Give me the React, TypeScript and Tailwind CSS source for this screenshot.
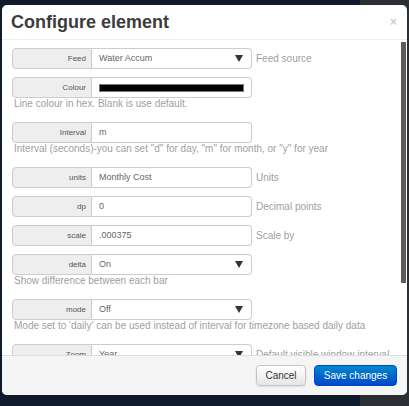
import React from "react";

type Field = {
  label: string;
  kind: "text" | "select" | "colour";
  value?: string;
  side?: string;
  help?: string;
};

const fields: Field[] = [
  { label: "Feed", kind: "select", value: "Water Accum", side: "Feed source" },
  { label: "Colour", kind: "colour", help: "Line colour in hex. Blank is use default." },
  {
    label: "Interval",
    kind: "text",
    value: "m",
    help: 'Interval (seconds)-you can set "d" for day, "m" for month, or "y" for year',
  },
  { label: "units", kind: "text", value: "Monthly Cost", side: "Units" },
  { label: "dp", kind: "text", value: "0", side: "Decimal points" },
  { label: "scale", kind: "text", value: ".000375", side: "Scale by" },
  { label: "delta", kind: "select", value: "On", help: "Show difference between each bar" },
  {
    label: "mode",
    kind: "select",
    value: "Off",
    help: "Mode set to 'daily' can be used instead of interval for timezone based daily data",
  },
  { label: "Zoom", kind: "select", value: "Year", side: "Default visible window interval" },
];

function Row({ f }: { f: Field }) {
  return (
    <div className="mb-2">
      <div className="flex items-center">
        <div className="flex h-[21px] w-[80px] items-center justify-end rounded-l-[4px] border border-[#ccc] bg-[#eeeeee] pr-[5px] text-[8px] font-normal text-[#555]">
          {f.label}
        </div>
        <div className="flex h-[21px] w-[160px] items-center rounded-r-[4px] border border-l-0 border-[#ccc] bg-white pl-[7px] pr-[7px] text-[9px] text-[#666]">
          {f.kind === "colour" ? (
            <div className="h-[8px] w-full border border-[#777] bg-black" />
          ) : (
            <span className="flex-1 truncate">{f.value}</span>
          )}
          {f.kind === "select" && (
            <svg width="8" height="7" viewBox="0 0 8 7" className="mr-px shrink-0">
              <polygon points="0,0 8,0 4,7" fill="#333" />
            </svg>
          )}
        </div>
        {f.side && <span className="ml-[4px] text-[10px] whitespace-nowrap text-[#a0a0a0]">{f.side}</span>}
      </div>
      {f.help && (
        <p className="h-[16px] pl-[2px] text-[10px] leading-[12px] whitespace-nowrap text-[#a0a0a0]">{f.help}</p>
      )}
    </div>
  );
}

export default function App() {
  return (
    <div
      className="h-[406px] w-[409px] overflow-hidden bg-[linear-gradient(to_right,#0f1b2b_360px,#2b2f33_360px)] pt-[5px] pl-[2px]"
      style={{ fontFamily: '"Liberation Sans", Arial, sans-serif' }}
    >
      <div className="flex h-[390px] w-[405px] flex-col overflow-hidden rounded-[5px] bg-white">
        <div className="flex h-[35px] shrink-0 items-center justify-between border-b border-[#eee] pl-[9px] pr-[10px]">
          <h3 className="text-[18px] font-bold text-[#3c3c3c]">Configure element</h3>
          <span className="text-[12px] font-bold text-[#ccc]">×</span>
        </div>

        <div className="flex min-h-0 flex-1">
          <div className="flex-1 overflow-hidden pt-[8px] pl-[10px]">
            {fields.map((f) => (
              <Row key={f.label} f={f} />
            ))}
          </div>
          <div className="mr-px w-[5px] pt-[2px]">
            <div className="h-[241px] w-full bg-[#5c5c5c]" />
          </div>
        </div>

        <div className="flex h-[40px] shrink-0 items-center justify-end gap-2 border-t border-[#ddd] bg-[#f5f5f5] pr-[10px]">
          <button
            type="button"
            className="h-[21px] w-[50px] rounded-[4px] border border-[#c5c5c5] bg-[linear-gradient(#ffffff,#e6e6e6)] text-[10px] text-[#333] shadow-[0_1px_2px_rgba(0,0,0,0.1)]"
          >
            Cancel
          </button>
          <button
            type="button"
            className="h-[21px] w-[83px] rounded-[4px] border border-[#0044cc] bg-[linear-gradient(#0088cc,#0048cc)] text-[10px] text-white"
          >
            Save changes
          </button>
        </div>
      </div>
    </div>
  );
}
